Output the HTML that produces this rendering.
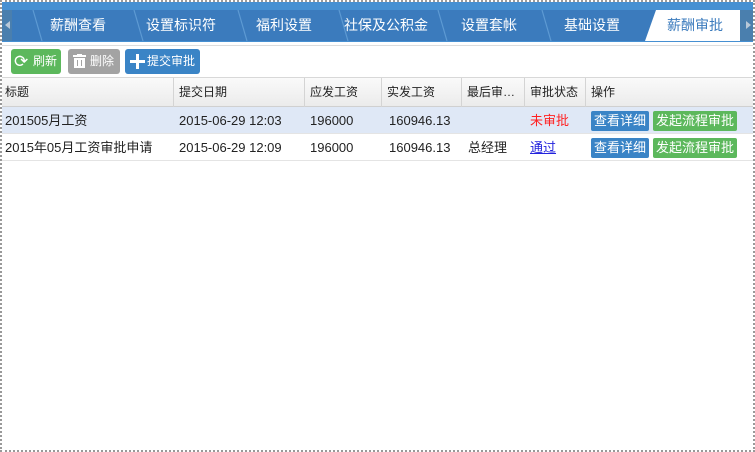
<!DOCTYPE html>
<html><head><meta charset="utf-8"><style>
*{margin:0;padding:0;box-sizing:border-box}
body{width:755px;height:452px;overflow:hidden;background:#fff;font-family:"Liberation Sans","Noto Sans CJK SC",sans-serif;font-size:12px;color:#222;position:relative}
.frame{position:absolute;left:0;top:0;width:755px;height:452px;border:2px dotted #999}
.bar{position:absolute;left:2px;top:2px;width:751px;height:40px;background:#4690d2}
.tabs{position:absolute;left:2px;top:10px}
.tl{position:absolute;top:10px;font-size:14px;color:#fff;line-height:30px}
.tb{position:absolute;top:49px;height:25px;border-radius:3px;color:#fff;font-size:12px;line-height:25px;padding-left:22px}
.hdr{position:absolute;left:2px;top:77px;width:751px;height:30px;background:linear-gradient(#fafafa,#ebebeb);border-top:1px solid #d8d8d8;border-bottom:1px solid #d0d0d0}
.c{position:absolute;line-height:28px;white-space:nowrap}
.hs{position:absolute;top:0;width:1px;height:29px;background:#d4d4d4}
.row{position:absolute;left:2px;width:751px;height:27px;border-bottom:1px solid #e4e4e4}
.btn{position:absolute;height:20px;line-height:20px;color:#fff;font-size:12px;padding:0 3px;border-radius:2px}
</style></head><body>
<div class="bar"></div>
<svg class="tabs" width="751" height="31" style="position:absolute;left:2px;top:10px">
<rect x="0" y="0" width="751" height="31" fill="#3b7bbd"/>
<rect x="0" y="0" width="10" height="31" fill="#4a7fae"/>
<polygon points="3,15 8,11 8,19" fill="#b8c8d8"/>
<g stroke="#5d9ad3" stroke-width="1.2" fill="none">
<line x1="31" y1="0" x2="40" y2="31"/>
<line x1="132" y1="0" x2="141" y2="31"/>
<line x1="236" y1="0" x2="245" y2="31"/>
<line x1="337" y1="0" x2="346" y2="31"/>
<line x1="436" y1="0" x2="445" y2="31"/>
<line x1="540" y1="0" x2="549" y2="31"/>
</g>
<polygon points="654,0 738,0 738,31 643,31" fill="#fff"/>
<rect x="738" y="0" width="13" height="31" fill="#4a7fae"/>
<polygon points="744,11 749,15 744,19" fill="#b8c8d8"/>
</svg>
<div class="tl" style="left:50px">薪酬查看</div>
<div class="tl" style="left:146px;width:72px;overflow:hidden">设置标识符</div>
<div class="tl" style="left:256px">福利设置</div>
<div class="tl" style="left:344px;width:92px;overflow:hidden">社保及公积金</div>
<div class="tl" style="left:461px">设置套帐</div>
<div class="tl" style="left:564px">基础设置</div>
<div class="tl" style="left:667px;color:#3b7bbd">薪酬审批</div>
<div style="position:absolute;left:2px;top:45px;width:751px;height:1px;background:#ddd"></div>

<div class="tb" style="left:11px;width:50px;background:#5cb85c"><span style="position:absolute;left:3px;top:0;font-size:17px">⟳</span>刷新</div>
<div class="tb" style="left:68px;width:52px;background:#a3a3a3"><svg style="position:absolute;left:5px;top:5px" width="13" height="15"><rect x="0" y="1" width="13" height="2" fill="#fff"/><rect x="4" y="0" width="5" height="2" fill="#fff"/><rect x="1" y="4" width="11" height="10" fill="#fff"/><rect x="4" y="6" width="1" height="6" fill="#a3a3a3"/><rect x="8" y="6" width="1" height="6" fill="#a3a3a3"/></svg>删除</div>
<div class="tb" style="left:125px;width:75px;background:#3a84c6"><svg style="position:absolute;left:5px;top:5px" width="15" height="15"><rect x="6" y="0" width="3" height="15" fill="#fff"/><rect x="0" y="6" width="15" height="3" fill="#fff"/></svg>提交审批</div>

<div class="hdr">
<span class="c" style="left:3px">标题</span>
<div class="hs" style="left:171px"></div><span class="c" style="left:177px">提交日期</span>
<div class="hs" style="left:302px"></div><span class="c" style="left:308px">应发工资</span>
<div class="hs" style="left:379px"></div><span class="c" style="left:385px">实发工资</span>
<div class="hs" style="left:459px"></div><span class="c" style="left:465px">最后审…</span>
<div class="hs" style="left:522px"></div><span class="c" style="left:528px">审批状态</span>
<div class="hs" style="left:583px"></div><span class="c" style="left:589px">操作</span>
</div>

<div class="row" style="top:107px;background:#dfe8f6">
<span class="c" style="left:3px;line-height:27px;font-size:13px">201505月工资</span>
<span class="c" style="left:177px;line-height:27px;font-size:13px">2015-06-29 12:03</span>
<span class="c" style="left:308px;line-height:27px;font-size:13px">196000</span>
<span class="c" style="left:387px;line-height:27px;font-size:13px">160946.13</span>
<span class="c" style="left:528px;line-height:27px;font-size:13px;color:#f22">未审批</span>
<span class="btn" style="left:589px;top:4px;background:#3a84c6;font-size:13px">查看详细</span>
<span class="btn" style="left:651px;top:4px;background:#5cb85c;font-size:13px">发起流程审批</span>
</div>
<div class="row" style="top:134px">
<span class="c" style="left:3px;line-height:27px;font-size:13px">2015年05月工资审批申请</span>
<span class="c" style="left:177px;line-height:27px;font-size:13px">2015-06-29 12:09</span>
<span class="c" style="left:308px;line-height:27px;font-size:13px">196000</span>
<span class="c" style="left:387px;line-height:27px;font-size:13px">160946.13</span>
<span class="c" style="left:466px;line-height:27px;font-size:13px">总经理</span>
<span class="c" style="left:528px;line-height:27px;font-size:13px;color:#22d;text-decoration:underline">通过</span>
<span class="btn" style="left:589px;top:4px;background:#3a84c6;font-size:13px">查看详细</span>
<span class="btn" style="left:651px;top:4px;background:#5cb85c;font-size:13px">发起流程审批</span>
</div>
<div class="frame"></div>
</body></html>
